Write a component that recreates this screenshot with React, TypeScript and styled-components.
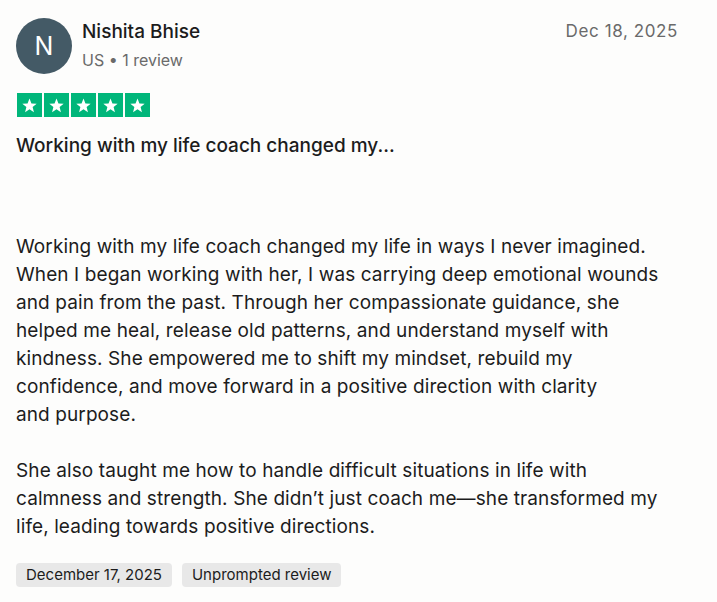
import styled, { createGlobalStyle } from 'styled-components'

const GlobalStyle = createGlobalStyle`
  html, body {
    margin: 0;
    padding: 0;
    background: #fdfdfc;
  }
  body {
    font-family: Inter, 'Noto Sans', 'Liberation Sans', sans-serif;
    color: #1c1c1c;
  }
`

const paragraphs = [
  [
    'Working with my life coach changed my life in ways I never imagined.',
    'When I began working with her, I was carrying deep emotional wounds',
    'and pain from the past. Through her compassionate guidance, she',
    'helped me heal, release old patterns, and understand myself with',
    'kindness. She empowered me to shift my mindset, rebuild my',
    'confidence, and move forward in a positive direction with clarity',
    'and purpose.',
  ],
  [
    'She also taught me how to handle difficult situations in life with',
    'calmness and strength. She didn’t just coach me—she transformed my',
    'life, leading towards positive directions.',
  ],
]

const Star = () => (
  <StarBox>
    <svg width="17" height="17" viewBox="0 0 24 24">
      <path
        d="M12 2.2l2.75 6.9 7.35.45-5.7 4.7 1.85 7.15L12 17.4l-6.25 4 1.85-7.15-5.7-4.7 7.35-.45z"
        fill="#ffffff"
      />
    </svg>
  </StarBox>
)

export default function App() {
  return (
    <>
      <GlobalStyle />
      <Card>
        <Header>
          <Avatar>N</Avatar>
          <Who>
            <Name>Nishita Bhise</Name>
            <Meta>US • 1 review</Meta>
          </Who>
          <PostDate>Dec 18, 2025</PostDate>
        </Header>
        <Stars>
          {[0, 1, 2, 3, 4].map((i) => (
            <Star key={i} />
          ))}
        </Stars>
        <Title>Working with my life coach changed my...</Title>
        <Body>
          {paragraphs.map((lines, i) => (
            <Paragraph key={i}>
              {lines.map((l, j) => (
                <Line key={j}>{l}</Line>
              ))}
            </Paragraph>
          ))}
        </Body>
        <Tags>
          <Tag>December 17, 2025</Tag>
          <Tag>Unprompted review</Tag>
        </Tags>
      </Card>
    </>
  )
}

const Card = styled.div`
  width: 662px;
  padding: 18px 39px 16px 16px;
  display: flex;
  flex-direction: column;
`

const Header = styled.div`
  display: flex;
  align-items: flex-start;
`

const Avatar = styled.div`
  width: 56px;
  height: 56px;
  border-radius: 50%;
  background: #445a66;
  color: #ffffff;
  font-size: 25px;
  display: flex;
  align-items: center;
  justify-content: center;
  flex-shrink: 0;
`

const Who = styled.div`
  display: flex;
  flex-direction: column;
  margin-left: 10px;
  padding-top: 2px;
  flex: 1;
`

const Name = styled.div`
  font-size: 19px;
  font-weight: 500;
  line-height: 24px;
  color: #1c1c1c;
`

const Meta = styled.div`
  font-size: 16px;
  line-height: 20px;
  margin-top: 6px;
  color: #6a6a6a;
`

const PostDate = styled.div`
  font-size: 17px;
  letter-spacing: 0.6px;
  line-height: 24px;
  padding-top: 1px;
  color: #6a6a6a;
`

const Stars = styled.div`
  display: flex;
  gap: 2px;
  margin-top: 19px;
  margin-left: 1px;
`

const StarBox = styled.div`
  width: 25px;
  height: 24px;
  background: #00b67a;
  display: flex;
  align-items: center;
  justify-content: center;
`

const Title = styled.div`
  font-size: 19px;
  font-weight: 500;
  line-height: 28px;
  margin-top: 15px;
`

const Body = styled.div`
  margin-top: 73px;
  display: flex;
  flex-direction: column;
  gap: 28px;
`

const Paragraph = styled.p`
  margin: 0;
  font-size: 19px;
  letter-spacing: 0.1px;
  line-height: 28px;
`

const Line = styled.span`
  display: block;
  white-space: nowrap;
`

const Tags = styled.div`
  display: flex;
  gap: 10px;
  margin-top: 22px;
`

const Tag = styled.div`
  background: #e8e8e8;
  border-radius: 4px;
  padding: 0 10px;
  height: 24px;
  font-size: 15px;
  line-height: 24px;
  color: #1c1c1c;
`
